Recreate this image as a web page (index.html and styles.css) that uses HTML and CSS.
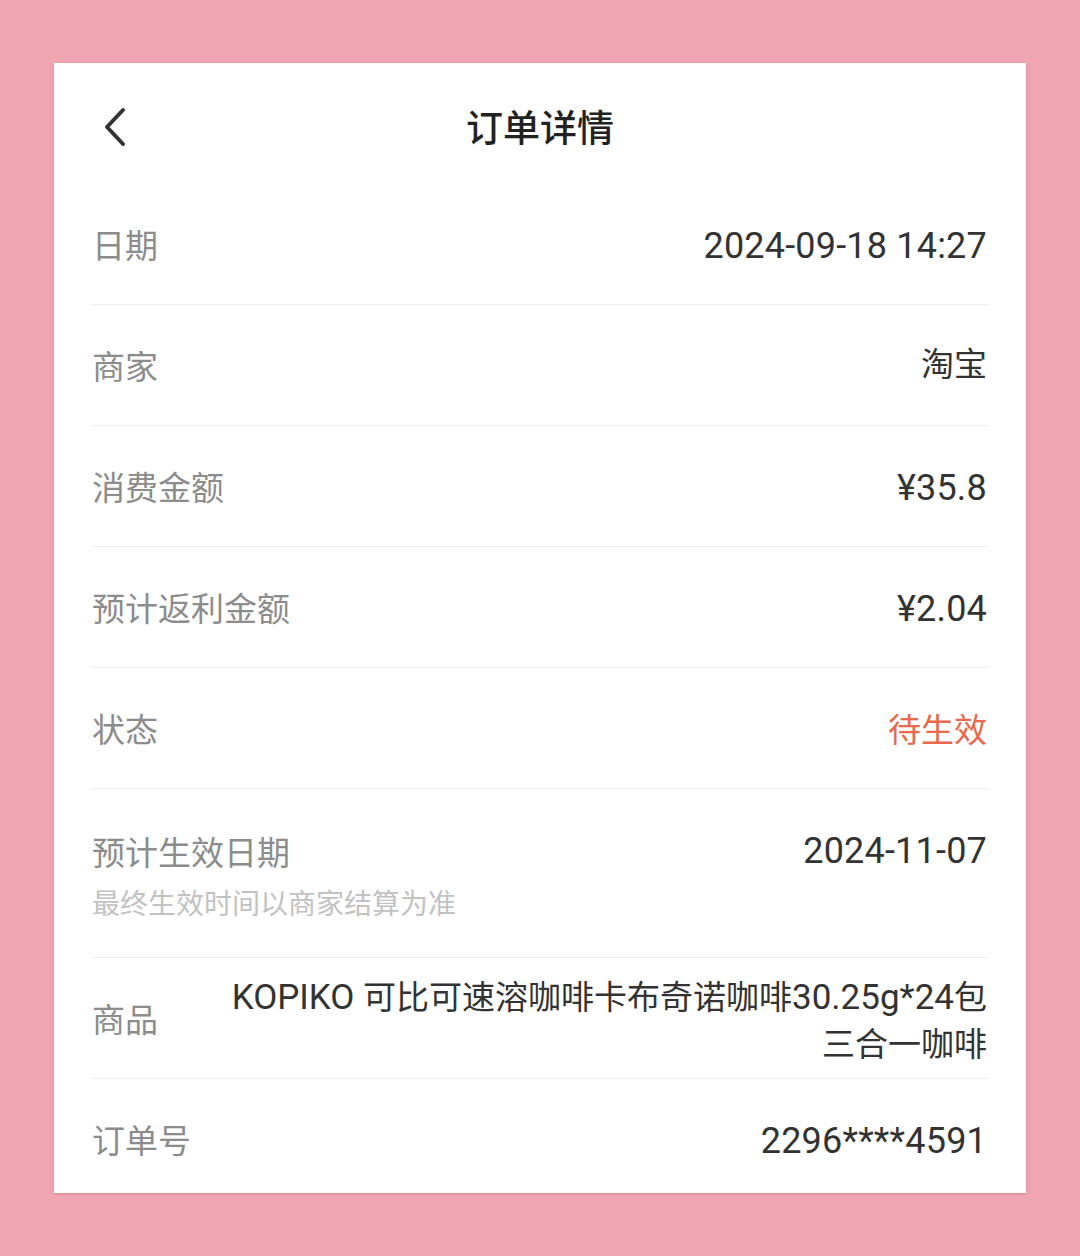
FILE: index.html
```html
<!DOCTYPE html>
<html lang="zh-CN">
<head>
<meta charset="utf-8">
<title>订单详情</title>
<link rel="stylesheet" href="styles.css">
</head>
<body>
<div class="card">
  <header class="header">
    <svg class="back" width="40" height="48" viewBox="0 0 40 48" aria-hidden="true">
      <path d="M24 8 L8 25 L24 42" fill="none" stroke="#333" stroke-width="4" stroke-linecap="round" stroke-linejoin="round"/>
    </svg>
    <h1 class="title">订单详情</h1>
  </header>
  <div class="list">
    <div class="row">
      <span class="label">日期</span>
      <span class="value num">2024-09-18 14:27</span>
    </div>
    <div class="row">
      <span class="label">商家</span>
      <span class="value">淘宝</span>
    </div>
    <div class="row">
      <span class="label">消费金额</span>
      <span class="value num">¥35.8</span>
    </div>
    <div class="row">
      <span class="label">预计返利金额</span>
      <span class="value num">¥2.04</span>
    </div>
    <div class="row">
      <span class="label">状态</span>
      <span class="value status">待生效</span>
    </div>
    <div class="row row-top">
      <div class="label-group">
        <span class="label">预计生效日期</span>
        <span class="sub">最终生效时间以商家结算为准</span>
      </div>
      <span class="value num">2024-11-07</span>
    </div>
    <div class="row">
      <span class="label">商品</span>
      <span class="value product"><span class="line"><span class="lat">KOPIKO </span>可比可速溶咖啡卡布奇诺咖啡<span class="lat">30.25g*24</span>包</span><span class="line">三合一咖啡</span></span>
    </div>
    <div class="row">
      <span class="label">订单号</span>
      <span class="value num">2296****4591</span>
    </div>
  </div>
</div>
</body>
</html>
```

FILE: styles.css
```css
html, body {
  margin: 0;
  padding: 0;
}
body {
  background: #efa6b2;
  width: 1080px;
  height: 1256px;
  overflow: hidden;
  font-family: Roboto, "Noto Sans CJK SC", sans-serif;
  padding-top: 63px;
  box-sizing: border-box;
}
.card {
  margin: 0 54px;
  height: 1130px;
  background: #fff;
  overflow: hidden;
  box-shadow: 0 1px 3px rgba(160, 80, 95, 0.35);
}
.header {
  position: relative;
  height: 121px;
  box-sizing: border-box;
  padding-bottom: 0;
  padding-top: 4px;
  display: flex;
  align-items: center;
  justify-content: center;
}
.back {
  position: absolute;
  left: 45px;
  top: 39px;
}
.title {
  margin: 0;
  font-family: "Noto Sans CJK SC", sans-serif;
  font-size: 37px;
  font-weight: 500;
  color: #222;
  line-height: 48px;
}
.list {
  margin: 0 37px;
}
.row {
  min-height: 120px;
  box-sizing: content-box;
  display: flex;
  align-items: center;
  justify-content: space-between;
  padding: 0 2px 0 1px;
  border-bottom: 1px solid #ededed;
}
.label {
  font-family: "Noto Sans CJK SC", sans-serif;
  font-size: 33px;
  color: #8c8c8c;
  line-height: 44px;
  white-space: nowrap;
}
.value {
  font-size: 33px;
  color: #333;
  line-height: 44px;
  text-align: right;
}
.num {
  font-size: 36px;
  letter-spacing: 0.2px;
  padding-top: 4px;
}
.status {
  color: #e8694b;
  font-family: "Noto Sans CJK SC", sans-serif;
}
.row-top {
  align-items: flex-start;
  padding-top: 40px;
  padding-bottom: 37px;
  min-height: 0;
}
.row-top .num {
  padding-top: 0;
}
.label-group {
  display: flex;
  flex-direction: column;
}
.sub {
  margin-top: 11px;
  font-family: "Noto Sans CJK SC", sans-serif;
  font-size: 28px;
  line-height: 36px;
  color: #c2c2c2;
}
.product {
  display: flex;
  flex-direction: column;
  align-items: flex-end;
  line-height: 47px;
  padding-top: 6px;
}
.line {
  white-space: nowrap;
}
.lat {
  font-size: 35px;
}
```
